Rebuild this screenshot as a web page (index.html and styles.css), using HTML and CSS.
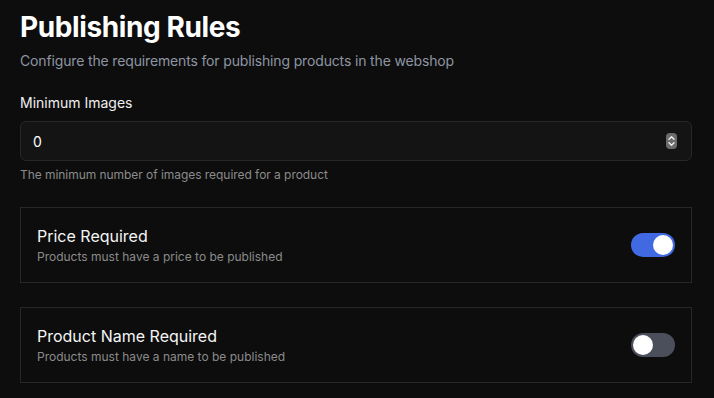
FILE: index.html
```html
<!DOCTYPE html>
<html lang="en">
<head>
    <meta charset="UTF-8">
    <meta name="viewport" content="width=device-width, initial-scale=1.0">
    <title>Publishing Rules</title>
    <link rel="stylesheet" href="styles.css">
</head>
<body>
    <div class="container">
        <header class="header">
            <h1>Publishing Rules</h1>
            <p>Configure the requirements for publishing products in the webshop</p>
        </header>

        <div class="field">
            <label for="minImages">Minimum Images</label>
            <div class="number-input">
                <input type="text" id="minImages" value="0">
                <span class="spinner">
                    <svg width="11" height="16" viewBox="0 0 11 16">
                        <rect x="0" y="0" width="11" height="16" rx="4" fill="#6b6b6b"/>
                        <path d="M3 6.2 L5.5 3.8 L8 6.2" fill="none" stroke="#f2f2f2" stroke-width="1.4" stroke-linecap="round" stroke-linejoin="round"/>
                        <path d="M3 9.8 L5.5 12.2 L8 9.8" fill="none" stroke="#f2f2f2" stroke-width="1.4" stroke-linecap="round" stroke-linejoin="round"/>
                    </svg>
                </span>
            </div>
            <p class="hint">The minimum number of images required for a product</p>
        </div>

        <div class="rule-card">
            <div class="rule-text">
                <h3>Price Required</h3>
                <p>Products must have a price to be published</p>
            </div>
            <span class="toggle on"><span class="knob"></span></span>
        </div>

        <div class="rule-card">
            <div class="rule-text">
                <h3>Product Name Required</h3>
                <p>Products must have a name to be published</p>
            </div>
            <span class="toggle"><span class="knob"></span></span>
        </div>
    </div>
</body>
</html>
```

FILE: styles.css
```css
:root {
    --background-color: #0d0d0d;
    --input-bg: #141414;
    --border-color: #272727;
    --text-color: #f5f5f5;
    --muted-color: #8b8b8b;
    --subtitle-color: #8d95a3;
    --primary-color: #4169e1;
    --toggle-off: #4a4f5b;
}

* {
    margin: 0;
    padding: 0;
    box-sizing: border-box;
}

body {
    font-family: Inter, 'Noto Sans', sans-serif;
    background-color: var(--background-color);
    color: var(--text-color);
}

.container {
    padding: 9px 22px 20px 20px;
}

.header h1 {
    font-size: 28px;
    line-height: 36px;
    font-weight: 700;
    letter-spacing: -0.4px;
    color: #ffffff;
}

.header p {
    margin-top: 6px;
    font-size: 14px;
    line-height: 20px;
    letter-spacing: -0.15px;
    color: var(--subtitle-color);
}

.field {
    margin-top: 22px;
}

.field label {
    display: block;
    font-size: 14px;
    line-height: 20px;
    font-weight: 400;
    color: #f0f0f0;
}

.number-input {
    margin-top: 8px;
    height: 40px;
    display: flex;
    align-items: center;
    padding: 0 14px 0 12px;
    background-color: var(--input-bg);
    border: 1px solid var(--border-color);
    border-radius: 6px;
}

.number-input input {
    flex: 1;
    background: transparent;
    border: none;
    outline: none;
    color: #ffffff;
    font-family: inherit;
    font-size: 14px;
}

.spinner {
    display: flex;
}

.hint {
    margin-top: 6px;
    font-size: 12px;
    line-height: 16px;
    letter-spacing: -0.05px;
    color: var(--muted-color);
}

.rule-card {
    margin-top: 24px;
    display: flex;
    align-items: center;
    justify-content: space-between;
    padding: 16px;
    border: 1px solid var(--border-color);
}

.rule-text h3 {
    font-size: 16px;
    line-height: 24px;
    font-weight: 400;
    color: #f5f5f5;
}

.rule-text p {
    font-size: 12px;
    line-height: 18px;
    color: var(--muted-color);
}

.toggle {
    width: 44px;
    height: 24px;
    border-radius: 12px;
    background-color: var(--toggle-off);
    display: flex;
    align-items: center;
    padding: 2px;
}

.toggle .knob {
    width: 20px;
    height: 20px;
    border-radius: 50%;
    background-color: #ffffff;
}

.toggle.on {
    background-color: var(--primary-color);
    justify-content: flex-end;
}
```
